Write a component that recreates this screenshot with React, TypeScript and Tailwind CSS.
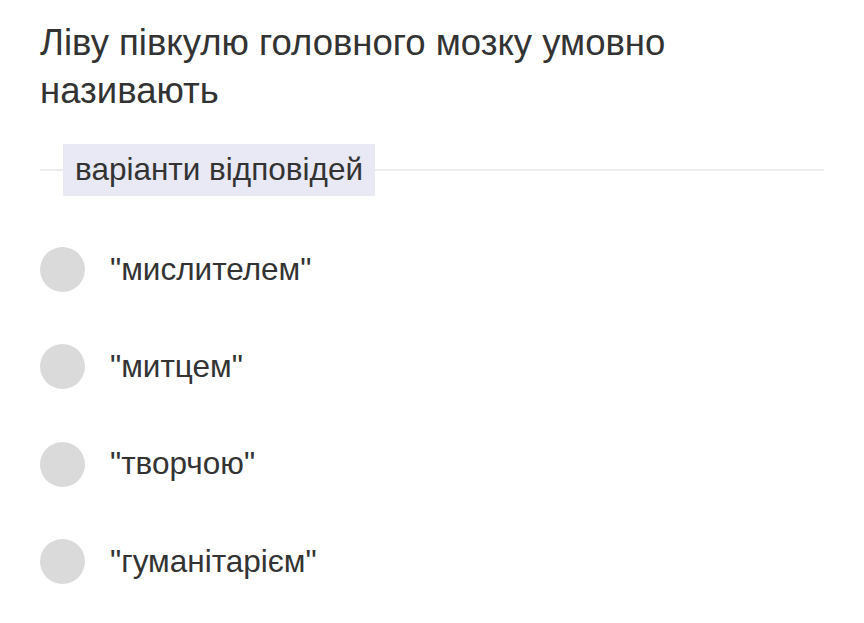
export default function App() {
  const options = ['"мислителем"', '"митцем"', '"творчою"', '"гуманітарієм"'];
  return (
    <div className="w-[864px] h-[623px] bg-white overflow-hidden" style={{ fontFamily: '"Liberation Sans", Arial, sans-serif' }}>
      <div className="pl-[40px] pr-[40px] pt-[19px]">
        <h1 className="text-[36.5px] leading-[48px] text-[#333333] font-normal pr-[140px]">
          Ліву півкулю головного мозку умовно називають
        </h1>
        <div className="mt-[29px] flex items-center">
          <div className="w-[23px] h-[2px] bg-[#ececec]" />
          <div className="bg-[#e9e9f5] h-[52px] px-[12px] flex items-center text-[31.5px] text-[#333333]">
            варіанти відповідей
          </div>
          <div className="flex-1 h-[2px] bg-[#ececec]" />
        </div>
        <div className="mt-[51px] flex flex-col gap-[52.3px]">
          {options.map((o) => (
            <div key={o} className="flex items-center h-[45px]">
              <div className="w-[45px] h-[45px] rounded-full bg-[#dadada] shrink-0" />
              <span className="ml-[25px] text-[31.5px] text-[#333333]">{o}</span>
            </div>
          ))}
        </div>
      </div>
    </div>
  );
}
